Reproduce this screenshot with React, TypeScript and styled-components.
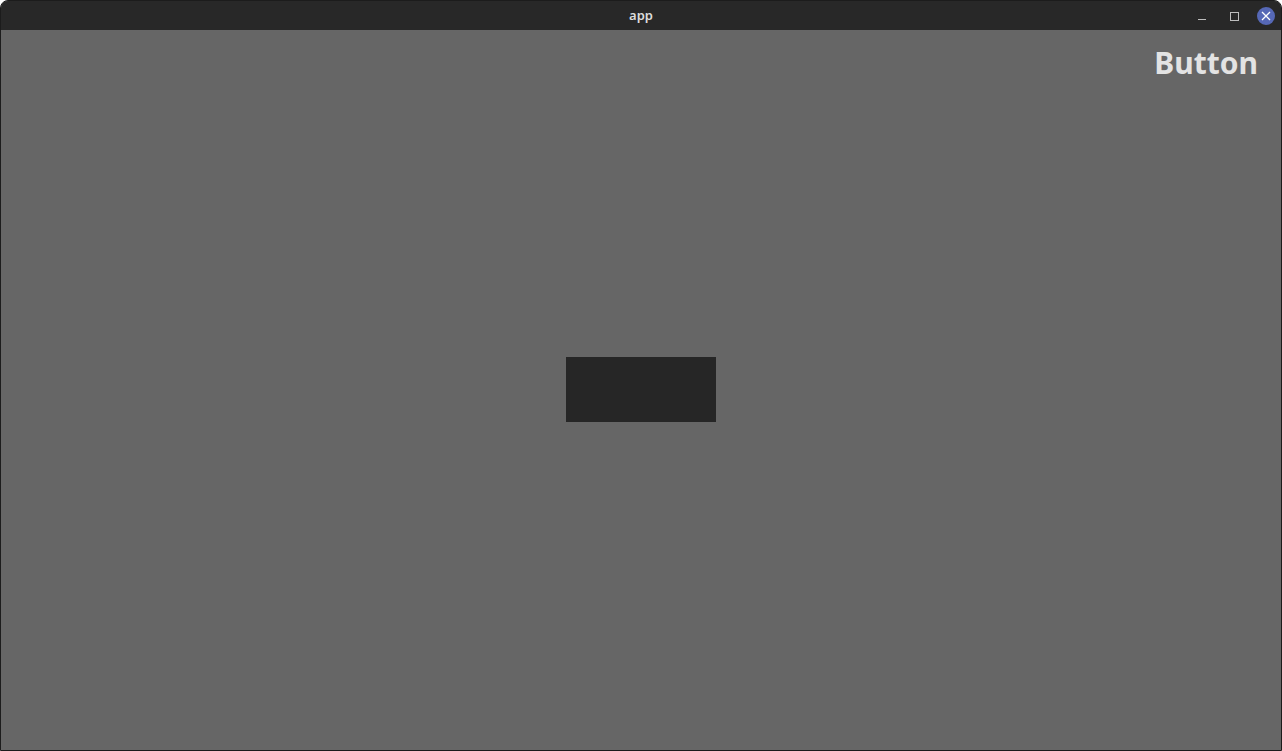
import React from "react";
import styled, { createGlobalStyle } from "styled-components";

const GlobalStyle = createGlobalStyle`
  html, body {
    margin: 0;
    padding: 0;
    background: #ffffff;
    font-family: "Noto Sans", "Open Sans", sans-serif;
  }
`;

const Window = styled.div`
  width: 1282px;
  height: 751px;
  box-sizing: border-box;
  border: 1px solid #1c1c1c;
  border-radius: 8px 8px 0 0;
  overflow: hidden;
  display: flex;
  flex-direction: column;
  background: #666666;
`;

const TitleBar = styled.header`
  height: 29px;
  flex: none;
  background: #282828;
  display: grid;
  grid-template-columns: 1fr auto 1fr;
  align-items: center;
`;

const Title = styled.span`
  grid-column: 2;
  color: #dcdcdc;
  font-size: 13px;
  font-weight: 600;
  line-height: 1;
  margin-top: -1px;
`;

const Controls = styled.div`
  grid-column: 3;
  justify-self: end;
  display: flex;
  align-items: center;
  gap: 14px;
  padding-right: 6px;
`;

const Control = styled.button<{ $close?: boolean }>`
  width: 18px;
  height: 18px;
  border: none;
  padding: 0;
  border-radius: 50%;
  display: flex;
  align-items: center;
  justify-content: center;
  background: ${(p) => (p.$close ? "#5668b6" : "transparent")};
  color: ${(p) => (p.$close ? "#ffffff" : "#bdbdbd")};
`;

const Content = styled.main`
  flex: 1;
  display: grid;
  grid-template-areas: "stack";
`;

const Heading = styled.h1`
  grid-area: stack;
  justify-self: end;
  align-self: start;
  margin: 18px 23px 0 0;
  font-size: 30px;
  line-height: 1;
  font-weight: 700;
  color: #e3e3e3;
`;

const Block = styled.div`
  grid-area: stack;
  place-self: center;
  width: 150px;
  height: 65px;
  margin-bottom: 1px;
  background: #262626;
`;

export default function App() {
  return (
    <>
      <GlobalStyle />
      <Window>
        <TitleBar>
          <Title>app</Title>
          <Controls>
            <Control aria-label="minimize">
              <svg width="10" height="10" viewBox="0 0 10 10">
                <path d="M1 8.5h8" stroke="currentColor" strokeWidth="1" />
              </svg>
            </Control>
            <Control aria-label="maximize">
              <svg width="10" height="10" viewBox="0 0 10 10">
                <rect x="1.5" y="1.5" width="8" height="8" fill="none" stroke="currentColor" strokeWidth="1" />
              </svg>
            </Control>
            <Control $close aria-label="close">
              <svg width="10" height="10" viewBox="0 0 10 10">
                <path d="M1 1l8 8M9 1l-8 8" stroke="currentColor" strokeWidth="1.3" />
              </svg>
            </Control>
          </Controls>
        </TitleBar>
        <Content>
          <Heading>Button</Heading>
          <Block />
        </Content>
      </Window>
    </>
  );
}
